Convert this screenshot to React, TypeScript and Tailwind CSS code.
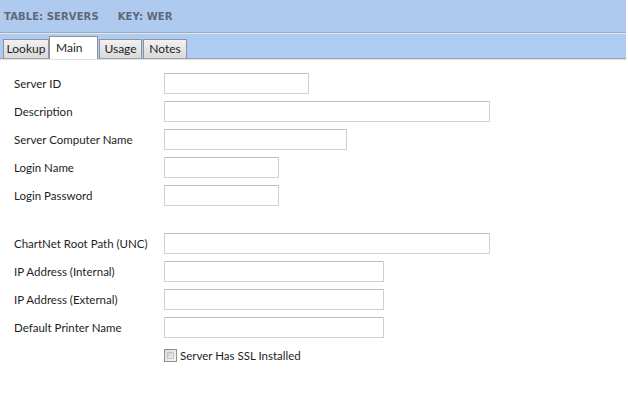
import React from 'react';

interface Field {
  label: string;
  width: number;
  gapBefore?: boolean;
}

const fields: Field[] = [
  { label: 'Server ID', width: 145 },
  { label: 'Description', width: 326 },
  { label: 'Server Computer Name', width: 183 },
  { label: 'Login Name', width: 115 },
  { label: 'Login Password', width: 115 },
  { label: 'ChartNet Root Path (UNC)', width: 326, gapBefore: true },
  { label: 'IP Address (Internal)', width: 220 },
  { label: 'IP Address (External)', width: 220 },
  { label: 'Default Printer Name', width: 220 },
];

const tabs = [
  { name: 'Lookup', w: 'w-[46px]' },
  { name: 'Main', w: 'w-[49px]' },
  { name: 'Usage', w: 'w-[43px]' },
  { name: 'Notes', w: 'w-[44px]' },
];

const App: React.FC = () => {
  return (
    <div className="w-[628px] h-[409px] bg-white font-['Lato',sans-serif] text-[#1e1e1e]">
      {/* Header */}
      <div className="w-[626px]">
        <div className="h-[32px] bg-[#afcaef] flex items-center pl-[4px] pt-[1px] font-['DejaVu_Sans',sans-serif] font-bold text-[10px] text-[#5e6878] tracking-[0.1px]">
          <span>TABLE: SERVERS</span>
          <span className="ml-[19px]">KEY: WER</span>
        </div>
        <div className="h-px bg-[#a2aab4]" />
        <div className="h-px bg-[#dfe8f4]" />

        {/* Tabs */}
        <div className="h-[25px] bg-[#aecbf1] border-b border-[#9ba4ae] flex items-end pl-[3px]">
          {tabs.map((t) =>
            t.name === 'Main' ? (
              <div
                key={t.name}
                className={`${t.w} h-[23px] -mb-px bg-white border border-b-0 border-[#8c939b] flex items-start pt-[2px] pl-[6px] text-[12px] relative z-10`}
              >
                {t.name}
              </div>
            ) : (
              <div
                key={t.name}
                className={`${t.w} h-[19px] bg-gradient-to-b from-[#f2f2f2] to-[#d9d9d9] border border-b-0 border-[#8c939b] flex items-center justify-center text-[12px] ml-[1px] first:ml-0`}
              >
                {t.name}
              </div>
            )
          )}
        </div>
        <div className="h-px bg-[#dcdfe3]" />
      </div>

      {/* Form */}
      <div className="pt-[13px] pl-[14px] flex flex-col gap-[7px] text-[11.5px]">
        {fields.map((f) => (
          <div key={f.label} className={`flex items-center h-[21px] ${f.gapBefore ? 'mt-[20px]' : ''}`}>
            <span className="w-[150px] shrink-0">{f.label}</span>
            <div
              className="h-[21px] bg-white border border-[#d0d0d0] border-t-[#bdbdbd] rounded-[1px]"
              style={{ width: f.width }}
            />
          </div>
        ))}
        <div className="flex items-center mt-[2px] pl-[150px]">
          <div className="w-[13px] h-[13px] border border-[#8e8f8f] bg-gradient-to-br from-[#dcdcdc] to-[#f8f8f8] p-[2px]">
            <div className="w-full h-full bg-gradient-to-br from-[#cfcfcf] to-[#f0f0f0] border border-[#c4c4c4]" />
          </div>
          <span className="ml-[3px]">Server Has SSL Installed</span>
        </div>
      </div>
    </div>
  );
};

export default App;
